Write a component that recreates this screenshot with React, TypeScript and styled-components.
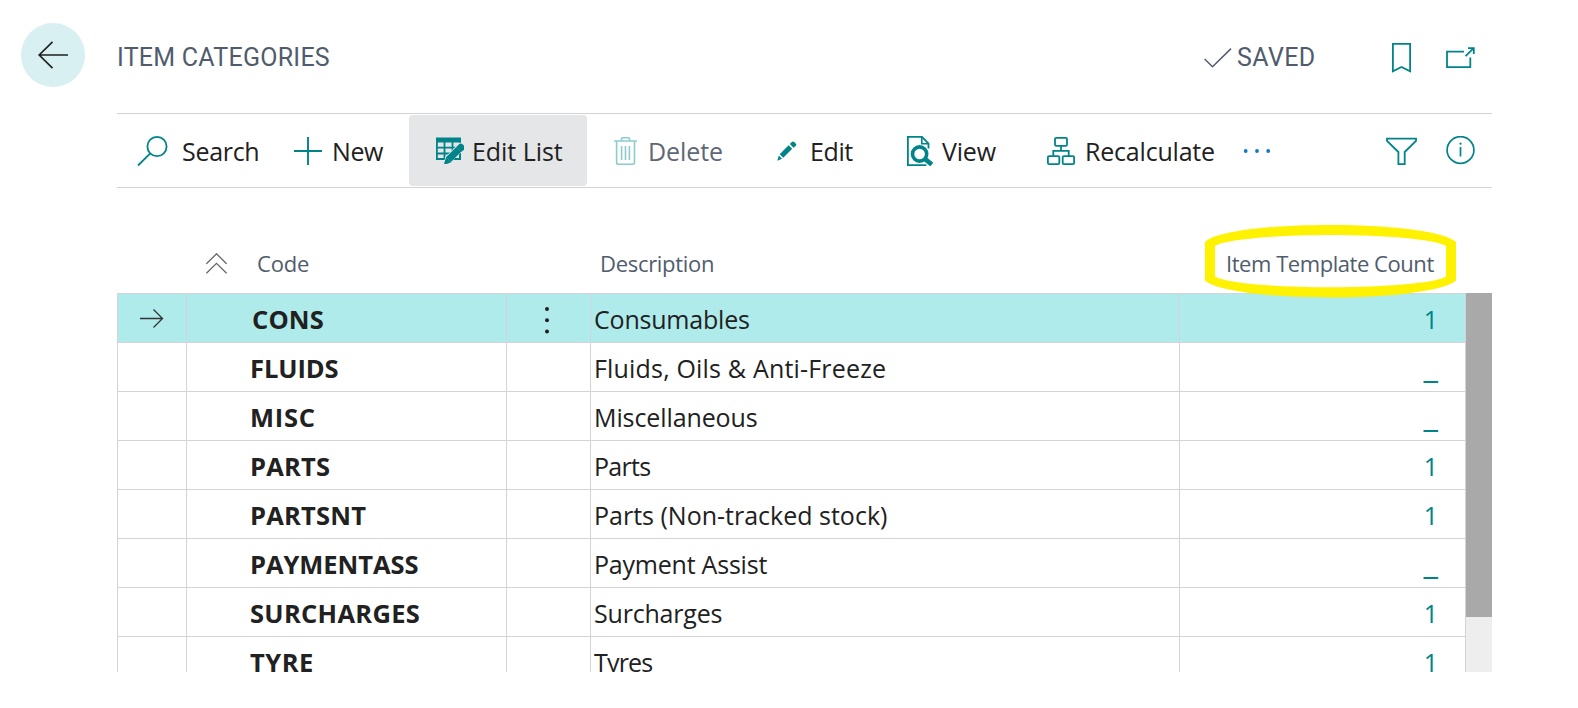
import React from 'react';
import styled, { createGlobalStyle } from 'styled-components';

const teal = '#00848a';
const slate = '#505c6d';
const ink = '#212121';
const line = '#d2d4d9';
const gridColumns = '69px 320px 84px 589px 287px';

const GlobalStyle = createGlobalStyle`
  * { box-sizing: border-box; }
  body { margin: 0; background: #fff; overflow: hidden; }
`;

const Page = styled.div`
  display: flex;
  align-items: flex-start;
  width: 1578px;
  height: 708px;
  font-family: 'Open Sans', 'Noto Sans', sans-serif;
  color: ${ink};
`;

const BackButton = styled.button`
  display: flex;
  flex: none;
  align-items: center;
  justify-content: center;
  width: 64px;
  height: 64px;
  margin: 23px 32px 0 21px;
  padding: 0;
  border: 0;
  border-radius: 50%;
  background: #d8f0f2;
`;

const Content = styled.main`
  width: 1375px;
`;

const TitleBar = styled.header`
  display: flex;
  align-items: center;
  height: 113px;
  padding: 3px 17px 0 0;
  font-family: Roboto, sans-serif;
  font-size: 25px;
  color: ${slate};
`;

const Title = styled.h1`
  flex: 1;
  margin: 0;
  font-size: 25px;
  font-weight: 450;
  letter-spacing: 0.25px;
  line-height: 30px;
`;

const Saved = styled.div`
  display: flex;
  align-items: center;
  gap: 5px;
  width: 188px;
  font-weight: 450;
  letter-spacing: 0.4px;
  line-height: 30px;
`;

const Tools = styled.div`
  display: flex;
  align-items: center;
  justify-content: space-between;
  width: 89px;
`;

const TitleTools = styled(Tools)`
  width: 83px;
`;

const Toolbar = styled.nav`
  display: flex;
  align-items: center;
  height: 75px;
  border-top: 1px solid #d3d3d3;
  border-bottom: 1px solid #d3d3d3;
  padding-right: 17px;
`;

const Command = styled.button<{ $width: number; $pad: number; $gap: number; $track: number; $active?: boolean; $disabled?: boolean }>`
  display: flex;
  flex: none;
  align-items: center;
  gap: ${p => p.$gap}px;
  width: ${p => p.$width}px;
  height: 71px;
  padding: 0 0 0 ${p => p.$pad}px;
  border: 0;
  border-radius: 4px;
  background: ${p => (p.$active ? '#e5e6e8' : 'transparent')};
  color: ${p => (p.$disabled ? '#5f6775' : ink)};
  font: 400 25px/34px 'Open Sans', 'Noto Sans', sans-serif;
  letter-spacing: ${p => p.$track}px;
  white-space: nowrap;

  svg { flex: none; }
`;

const Spacer = styled.div`
  flex: 1;
`;

const ColumnHeaders = styled.div`
  display: grid;
  grid-template-columns: ${gridColumns};
  height: 105px;
  color: ${slate};
  font-size: 22px;
  line-height: 30px;
`;

const HeaderCell = styled.div<{ $pad?: number; $track?: number }>`
  position: relative;
  display: flex;
  align-items: flex-start;
  padding: 60px 0 0 ${p => p.$pad ?? 0}px;
  letter-spacing: ${p => p.$track ?? 0}px;
  white-space: nowrap;
`;

const SortIcon = styled.span`
  display: flex;
  width: 52px;
  padding: 5px 0 0 1px;
`;

const Ring = styled.svg`
  position: absolute;
  left: 26px;
  top: 37px;
`;

const TableArea = styled.div`
  display: flex;
  height: 379px;
  overflow: hidden;
`;

const Rows = styled.div`
  width: 1349px;
`;

const Row = styled.div<{ $selected?: boolean }>`
  display: grid;
  grid-template-columns: ${gridColumns};
  height: 49px;
  border-top: 1px solid ${line};
  background: ${p => (p.$selected ? '#afebeb' : '#fff')};
  font-size: 25px;
  line-height: 48px;
`;

const Cell = styled.div`
  border-left: 1px solid ${line};
  white-space: nowrap;
`;

const IconCell = styled(Cell)`
  display: flex;
  justify-content: center;
  align-items: center;
`;

const MenuCell = styled(IconCell)`
  padding: 3px 3px 0 0;
`;

const CodeCell = styled(Cell)<{ $track: number; $selected: boolean }>`
  padding: 1px 0 0 ${p => (p.$selected ? 65 : 63)}px;
  font-size: 25.5px;
  font-weight: 700;
  letter-spacing: ${p => p.$track}px;
`;

const TextCell = styled(Cell)<{ $track: number }>`
  padding: 1px 0 0 3px;
  letter-spacing: ${p => p.$track}px;
`;

const CountCell = styled(Cell)<{ $empty: boolean }>`
  border-right: 1px solid ${line};
  padding: 1px 27px 0 0;
  color: ${teal};
  text-align: right;
  ${p => p.$empty && 'font-size: 33px; line-height: 43px;'}
`;

const Scrollbar = styled.div`
  width: 26px;
  background: #eee;
`;

const Thumb = styled.div`
  height: 324px;
  background: #a9a9a9;
`;

const SearchIcon = () => (
  <svg width="32" height="32" viewBox="0 0 32 32" fill="none" stroke={teal} strokeWidth="1.8">
    <circle cx="20" cy="11.5" r="9.6" />
    <path d="M13.3 18.3 1 30.5" />
  </svg>
);

const PlusIcon = () => (
  <svg width="28" height="28" viewBox="0 0 28 28" stroke={teal} strokeWidth="1.9">
    <path d="M14 0v28M0 14h28" />
  </svg>
);

const Pencil = ({ x = 0, y = 0 }: { x?: number; y?: number }) => (
  <g transform={`translate(${x} ${y})`} fill={teal}>
    <path d="M0.3 19.7 1.9 14.6 5 17.8Z" />
    <path d="M2.7 13.2 11.6 4.2 15.2 7.8 6.3 16.8Z" />
    <path d="M12.9 3 14.8 1.1Q16-.1 17.5 1.2L18.7 2.4Q19.9 3.8 18.7 5L16.5 6.8Z" />
  </g>
);

const EditListIcon = () => (
  <svg width="28" height="27" viewBox="0 0 28 27" fill="none" stroke={teal} strokeWidth="1.8">
    <path d="M0 0.5h25v5H0Z" fill={teal} stroke="none" />
    <path d="M.9 5v17h23.2V5M1 10.7h22M1 16.5h16M8.5 5v17M16.5 5v12" />
    <path d="M7.5 27 9.3 20 21 8 23 5.8 29 5.8 29 12 13 27Z" fill="#e5e6e8" stroke="none" />
    <path d="M18.8 22h5.3V16.8" />
    <Pencil x={8.7} y={7} />
  </svg>
);

const TrashIcon = () => (
  <svg width="24" height="28" viewBox="0 0 24 28" fill="none" stroke="#8ccbce" strokeWidth="1.6">
    <path d="M0 4h23M7.5 4V1.8Q7.5.8 8.5.8h6q1 0 1 1V4M2.6 4v21.2q0 2 2 2h13.9q2 0 2-2V4M7.6 9v14M11.5 9v14M15.4 9v14" />
  </svg>
);

const EditIcon = () => (
  <svg width="20" height="20" viewBox="0 0 20 20">
    <Pencil />
  </svg>
);

const ViewIcon = () => (
  <svg width="27" height="30" viewBox="0 0 27 30" fill="none" stroke={teal}>
    <path d="M21.5 12.5V7.5L15 .9H.9v28.2h18.5" strokeWidth="1.8" />
    <path d="M14.8 1v6.7h6.7" strokeWidth="1.6" />
    <circle cx="12.6" cy="18" r="7.1" strokeWidth="3.6" />
    <path d="m17.5 22.6 7.3 6" strokeWidth="4.6" />
  </svg>
);

const HierarchyIcon = () => (
  <svg width="28" height="28" viewBox="0 0 28 28" fill="none" stroke={teal} strokeWidth="1.8">
    <rect x="8" y=".9" width="12" height="8" rx="1.2" />
    <rect x=".9" y="19.1" width="11.4" height="8" rx="1.2" />
    <rect x="15.7" y="19.1" width="11.4" height="8" rx="1.2" />
    <path d="M14 9v5M6.3 19v-5.1h15.4V19" />
  </svg>
);

const MoreIcon = () => (
  <svg width="28" height="6" viewBox="0 0 28 6" fill="#0f78c8">
    <circle cx="2.7" cy="3" r="1.9" />
    <circle cx="14" cy="3" r="1.9" />
    <circle cx="25.2" cy="3" r="1.9" />
  </svg>
);

const FilterIcon = () => (
  <svg width="31" height="28" viewBox="0 0 31 28" fill="none" stroke={teal} strokeWidth="1.8">
    <path d="M1 1.7h29v2.2L18.7 15V27.1h-6.3V15L1 3.9Z" />
  </svg>
);

const InfoIcon = () => (
  <svg width="29" height="29" viewBox="0 0 29 29" fill="none" stroke={teal} strokeWidth="1.7">
    <circle cx="14.5" cy="14" r="13.4" />
    <path d="M14.5 11V20.5" />
    <circle cx="14.5" cy="7.7" r="1.1" fill={teal} stroke="none" />
  </svg>
);

const BookmarkIcon = () => (
  <svg width="19" height="30" viewBox="0 0 19 30" fill="none" stroke={teal} strokeWidth="1.8">
    <path d="M.9.9h17.2v27.4L9.5 24 .9 28.3Z" />
  </svg>
);

const PopOutIcon = () => (
  <svg width="29" height="22" viewBox="0 0 29 22" fill="none" stroke={teal} strokeWidth="1.8">
    <path d="M18 4.6H1v15.6h23.3V10.4M19.6 9.1 27.6 1.2M22 1.1h5.8v6" />
  </svg>
);

const CheckIcon = () => (
  <svg width="28" height="20" viewBox="0 0 28 20" fill="none" stroke={slate} strokeWidth="1.5">
    <path d="M.6 11 8.5 18.8 27 .6" />
  </svg>
);

const BackArrow = () => (
  <svg width="30" height="28" viewBox="0 0 30 28" fill="none" stroke={ink} strokeWidth="1.7">
    <path d="M30 14H1.2M14.5.8 1.2 14l13.3 13.2" />
  </svg>
);

const RowArrow = () => (
  <svg width="24" height="19" viewBox="0 0 24 19" fill="none" stroke="#333" strokeWidth="1.3">
    <path d="M0 9.5h22.5M13.5.5l9 9-9 9" />
  </svg>
);

const Chevrons = () => (
  <svg width="21" height="21" viewBox="0 0 21 21" fill="none" stroke="#666" strokeWidth="1.3">
    <path d="M.4 10.8 10.5.8l10.1 10M.4 20.3l10.1-10 10.1 10" />
  </svg>
);

const RowMenu = () => (
  <svg width="6" height="28" viewBox="0 0 6 28" fill={ink}>
    <circle cx="3" cy="3" r="2" />
    <circle cx="3" cy="14.2" r="2" />
    <circle cx="3" cy="25.5" r="2" />
  </svg>
);

const categories = [
  { code: 'CONS', codeTrack: 0.15, text: 'Consumables', track: -0.2, count: 1 },
  { code: 'FLUIDS', codeTrack: -0.1, text: 'Fluids, Oils & Anti-Freeze', track: 0.18, count: 0 },
  { code: 'MISC', codeTrack: 0.7, text: 'Miscellaneous', track: -0.1, count: 0 },
  { code: 'PARTS', codeTrack: 0.2, text: 'Parts', track: -0.7, count: 1 },
  { code: 'PARTSNT', codeTrack: 0.2, text: 'Parts (Non-tracked stock)', track: 0, count: 1 },
  { code: 'PAYMENTASS', codeTrack: -0.05, text: 'Payment Assist', track: -0.22, count: 0 },
  { code: 'SURCHARGES', codeTrack: 0.3, text: 'Surcharges', track: -0.2, count: 1 },
  { code: 'TYRE', codeTrack: 0.5, text: 'Tyres', track: -0.8, count: 1 },
];

export default function App() {
  return (
    <>
      <GlobalStyle />
      <Page>
        <BackButton aria-label="Back"><BackArrow /></BackButton>
        <Content>
          <TitleBar>
            <Title>ITEM CATEGORIES</Title>
            <Saved><CheckIcon />SAVED</Saved>
            <TitleTools>
              <BookmarkIcon />
              <PopOutIcon />
            </TitleTools>
          </TitleBar>
          <Toolbar>
            <Command $width={163} $pad={20} $gap={13} $track={-0.3}><SearchIcon />Search</Command>
            <Command $width={129} $pad={14} $gap={10} $track={-0.4}><PlusIcon />New</Command>
            <Command $width={178} $pad={27} $gap={8} $track={-0.05} $active><EditListIcon />Edit List</Command>
            <Command $width={166} $pad={27} $gap={10} $track={-0.1} $disabled><TrashIcon />Delete</Command>
            <Command $width={130} $pad={24} $gap={13} $track={-0.4}><EditIcon />Edit</Command>
            <Command $width={140} $pad={24} $gap={8} $track={-0.2}><ViewIcon />View</Command>
            <Command $width={198} $pad={24} $gap={10} $track={-0.2}><HierarchyIcon />Recalculate</Command>
            <Command $width={60} $pad={22} $gap={0} $track={0} aria-label="More"><MoreIcon /></Command>
            <Spacer />
            <Tools>
              <FilterIcon />
              <InfoIcon />
            </Tools>
          </Toolbar>
          <ColumnHeaders>
            <HeaderCell />
            <HeaderCell $pad={19} $track={-0.2}><SortIcon><Chevrons /></SortIcon><span>Code</span></HeaderCell>
            <HeaderCell />
            <HeaderCell $pad={10} $track={-0.3}>Description</HeaderCell>
            <HeaderCell $pad={47} $track={-0.45}>
              Item Template Count
              <Ring width="251" height="73" viewBox="0 0 251 73" fill="#fff200">
                <path
                  fillRule="evenodd"
                  d="M0 17C10 7 60 0 125.5 0S241 7 251 17V55.500C241 65 191 72.500 125.500 72.500S10 65 0 55.500ZM10 21V51.500C20 58 70 62.300 125.500 62.300S231 58 241 51.500V21C231 14.500 181 10 125.500 10S20 14.500 10 21Z"
                />
              </Ring>
            </HeaderCell>
          </ColumnHeaders>
          <TableArea>
            <Rows>
              {categories.map((c, i) => (
                <Row key={c.code} $selected={i === 0}>
                  <IconCell>{i === 0 && <RowArrow />}</IconCell>
                  <CodeCell $track={c.codeTrack} $selected={i === 0}>{c.code}</CodeCell>
                  <MenuCell>{i === 0 && <RowMenu />}</MenuCell>
                  <TextCell $track={c.track}>{c.text}</TextCell>
                  <CountCell $empty={!c.count}>{c.count || '_'}</CountCell>
                </Row>
              ))}
            </Rows>
            <Scrollbar><Thumb /></Scrollbar>
          </TableArea>
        </Content>
      </Page>
    </>
  );
}
